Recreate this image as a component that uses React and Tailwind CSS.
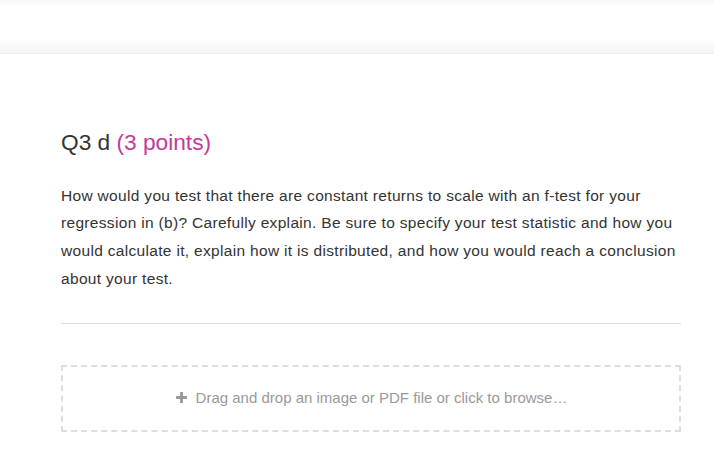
import React from "react";

function Dropzone() {
  return (
    <div className="mt-[41px] h-[67px] border-2 border-dashed border-[#dedede] flex items-center justify-center gap-[8px] text-[15px] text-[#999] cursor-pointer">
      <svg width="13" height="13" viewBox="0 0 12 12" className="mt-[-1px]">
        <path d="M6 1v10M1 6h10" stroke="#999" strokeWidth="2.6" />
      </svg>
      <span>Drag and drop an image or PDF file or click to browse…</span>
    </div>
  );
}

export default function App() {
  return (
    <div className="min-h-screen bg-white font-['Liberation_Sans',Arial,sans-serif] text-[#333]">
      {/* end of previous question card */}
      <div className="h-[54px] bg-[linear-gradient(to_bottom,#f6f6f6_0px,#ffffff_6px,#ffffff_38px,#f4f4f4_54px)] border-b border-[#eeeeee]" />

      <section className="bg-white pl-[61px] pr-[33px] pt-[77px] pb-10">
        <h2 className="text-[22.7px] leading-none font-normal">
          Q3 d <span className="text-[#c4399c]">(3 points)</span>
        </h2>

        <p className="mt-[28px] text-[15.5px] leading-[27.7px] tracking-[0.32px]">
          How would you test that there are constant returns to scale with an f-test for your regression in (b)? Carefully explain. Be sure to specify your test statistic and how you would calculate it, explain how it is distributed, and how you would reach a conclusion about your test.
        </p>

        <hr className="mt-[30px] border-0 border-t border-[#dddddd]" />

        <Dropzone />
      </section>
    </div>
  );
}
